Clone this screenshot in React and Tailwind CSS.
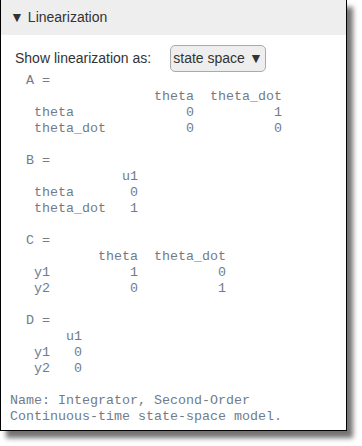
const blocks = [
  "  A = ",
  "                  theta  theta_dot",
  "   theta              0          1",
  "   theta_dot          0          0",
  " ",
  "  B = ",
  "              u1",
  "   theta       0",
  "   theta_dot   1",
  " ",
  "  C = ",
  "           theta  theta_dot",
  "   y1          1          0",
  "   y2          0          1",
  " ",
  "  D = ",
  "       u1",
  "   y1   0",
  "   y2   0",
  " ",
  "Name: Integrator, Second-Order",
  "Continuous-time state-space model.",
];

export default function App() {
  return (
    <div className="w-[362px] h-[446px] bg-white">
      <div className="w-[347px] h-[431px] bg-white border-x border-b border-black shadow-[6px_7px_5px_rgba(0,0,0,0.55)] flex flex-col">
        <div className="h-[35px] bg-[#eeeeee] flex items-center pl-[9px] text-[14px] text-[#333] font-['Liberation_Sans',Arial,sans-serif]">
          <span className="text-[14px] mr-[4px]">▼</span>
          <span>Linearization</span>
        </div>
        <div className="flex items-center h-[37px] pt-[10px] pl-[14px] text-[14px] text-[#333] font-['Liberation_Sans',Arial,sans-serif]">
          <span className="w-[155px]">Show linearization as:</span>
          <div className="w-[96px] h-[27px] flex items-center justify-center whitespace-nowrap rounded-[5px] border border-[#aaa] bg-[#eeeeee]">
            state space<span className="ml-[4px] text-[14px]">▼</span>
          </div>
        </div>
        <pre className="pl-[9px] mt-[1px] text-[13.33px] leading-[16px] text-[#717c89] font-['Liberation_Mono','Courier_New',monospace]">
          {blocks.join("\n")}
        </pre>
      </div>
    </div>
  );
}
